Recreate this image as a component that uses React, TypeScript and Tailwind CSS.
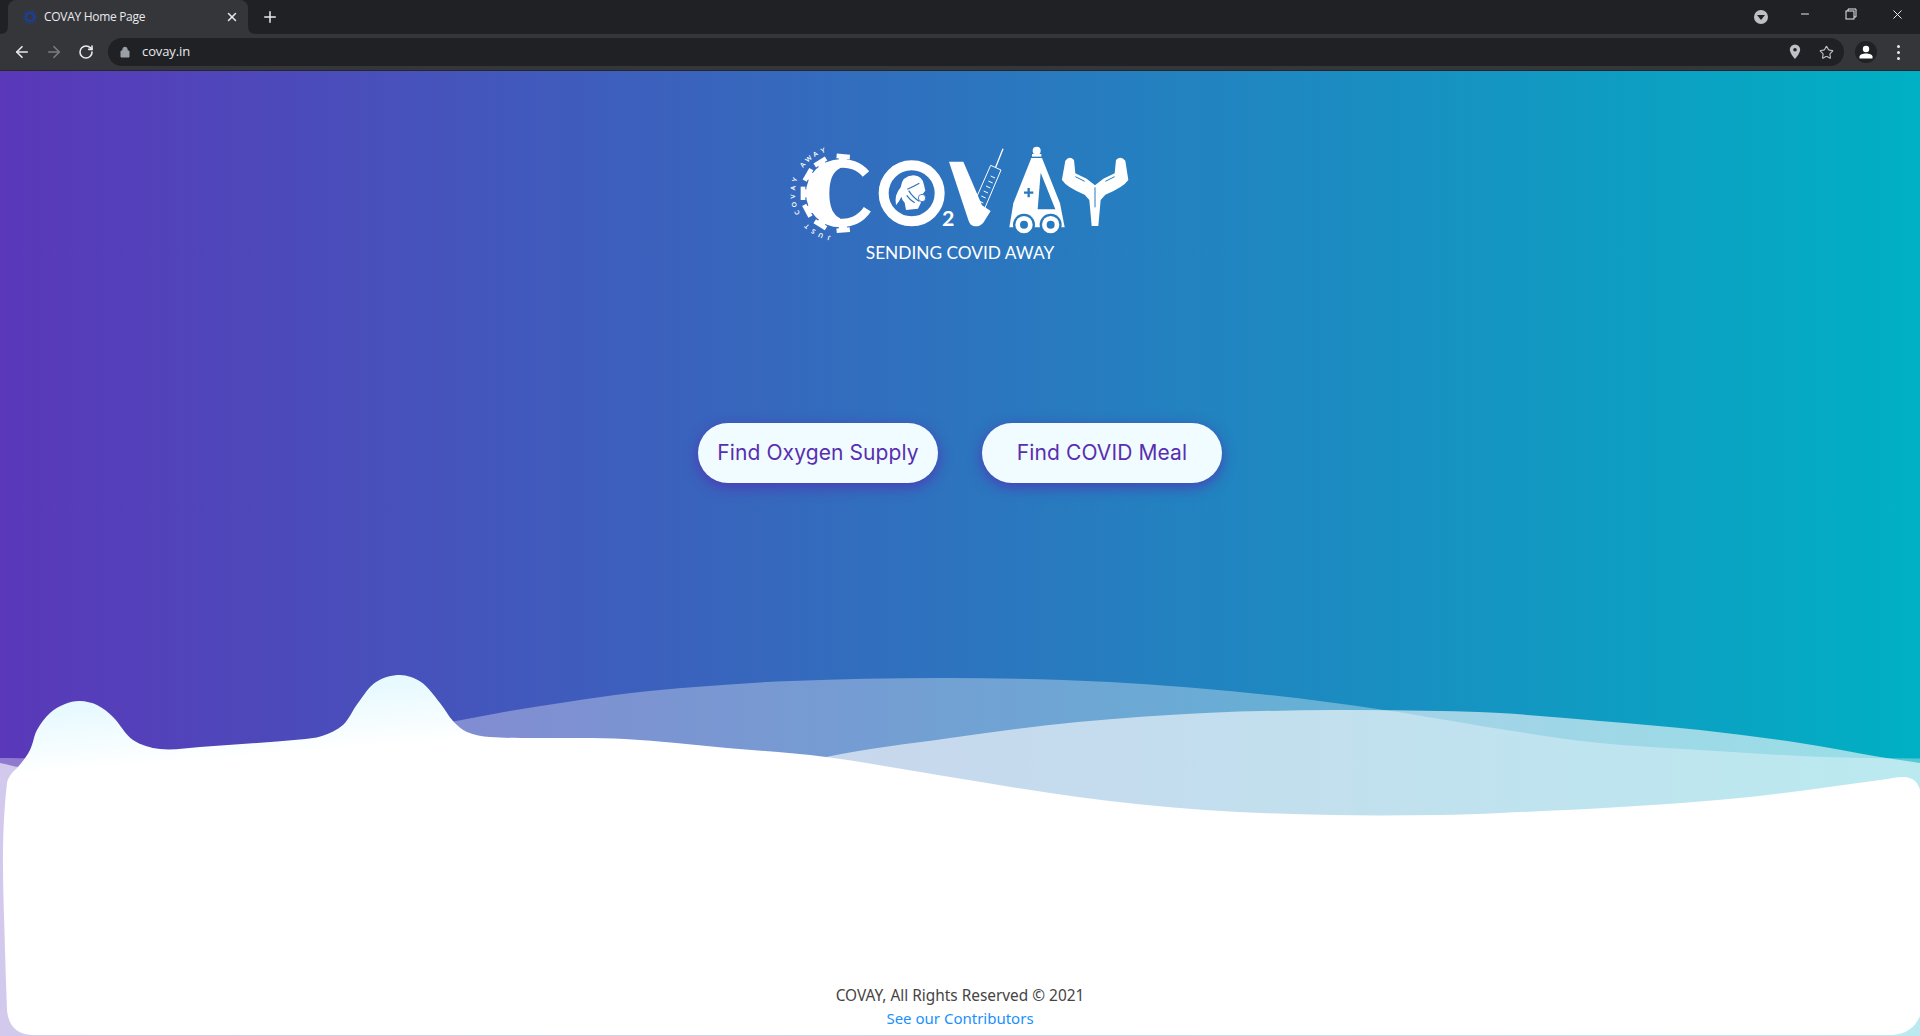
import React from 'react';
import { ArrowLeft, ArrowRight, RotateCw, Plus, X, Star, Minus } from 'lucide-react';

type Pt = [number, number];

// catmull-rom through the traced points, chord-length spaced so uneven points don't kink
function smooth(pts: Pt[]) {
  const t: number[] = [0];
  for (let i = 1; i < pts.length; i++) {
    t.push(t[i - 1] + Math.hypot(pts[i][0] - pts[i - 1][0], pts[i][1] - pts[i - 1][1]));
  }
  const tangent = (i: number): Pt => {
    const a = Math.max(i - 1, 0);
    const b = Math.min(i + 1, pts.length - 1);
    const dt = t[b] - t[a];
    return [(pts[b][0] - pts[a][0]) / dt, (pts[b][1] - pts[a][1]) / dt];
  };
  let d = `M${pts[0][0]} ${pts[0][1]}`;
  for (let i = 0; i < pts.length - 1; i++) {
    const h = (t[i + 1] - t[i]) / 3;
    const m1 = tangent(i);
    const m2 = tangent(i + 1);
    const c1x = pts[i][0] + m1[0] * h;
    const c1y = pts[i][1] + m1[1] * h;
    const c2x = pts[i + 1][0] - m2[0] * h;
    const c2y = pts[i + 1][1] - m2[1] * h;
    d += ` C${c1x.toFixed(1)} ${c1y.toFixed(1)} ${c2x.toFixed(1)} ${c2y.toFixed(1)} ${pts[i + 1][0]} ${pts[i + 1][1]}`;
  }
  return d;
}

const backWave: Pt[] = [
  [0, 758], [30, 758], [300, 745], [400, 731], [456, 721], [504, 712], [567, 702], [631, 693], [695, 687],
  [791, 681], [950, 678], [1110, 682], [1269, 695], [1384, 710], [1440, 719], [1500, 729], [1600, 743],
  [1700, 750], [1800, 756], [1867, 758], [1920, 758.5],
];
const frontWave: Pt[] = [
  [0, 763], [20, 767], [300, 780], [700, 790], [826, 757], [950, 738], [1078, 722], [1205, 713],
  [1333, 710], [1440, 711], [1500, 713], [1600, 721], [1700, 730], [1800, 743], [1880, 757], [1920, 763],
];
const whiteEdge: Pt[] = [
  [7, 1010], [5, 950], [3, 850], [7, 783], [12, 773], [18, 767], [30, 750], [37, 730], [50, 713],
  [65, 704], [80, 701], [97, 705], [113, 717], [133, 740], [160, 749], [200, 747], [300, 739.5], [322, 736],
  [343, 725], [358, 703], [376, 682], [400, 675], [421, 682], [440, 703], [453, 721], [467, 732],
  [490, 737], [540, 738], [625, 739], [727, 748], [826, 757], [950, 777], [1078, 797], [1205, 810], [1333, 815],
  [1440, 815], [1500, 813], [1620, 807], [1750, 797], [1880, 780], [1905, 777], [1916, 782], [1922, 795],
];

function Waves() {
  return (
    <svg className="absolute inset-0 w-full h-full" viewBox="0 71 1920 965" preserveAspectRatio="none">
      <defs>
        <linearGradient id="tint" gradientUnits="userSpaceOnUse" x1="80" y1="700" x2="85.5" y2="770">
          <stop offset="0" stopColor="#e4f9ff" />
          <stop offset="1" stopColor="#ffffff" />
        </linearGradient>
      </defs>
      <path d={`${smooth(backWave)} L1920 1036 L0 1036 Z`} fill="#fff" fillOpacity="0.33" />
      <path d={`${smooth(frontWave)} L1920 1036 L0 1036 Z`} fill="#fff" fillOpacity="0.6" />
      <path
        d={`${smooth(whiteEdge)} L1922 1010 Q1916 1033 1893 1035 L32 1035 Q9 1034 7 1010 Z`}
        fill="url(#tint)"
      />
    </svg>
  );
}

const spikes = [-85, -122, -150, -180, -208, -238, -275];
const ringLetters = 'JUST COVAY AWAY'.split('');

function Logo() {
  return (
    <svg width="380" height="114" viewBox="0 0 1140 342" fill="#fff">
      {/* C with the virus spikes */}
      {spikes.map((a) => (
        <g key={a} transform={`rotate(${a} 210 190)`}>
          <rect x="290" y="178" width="28" height="24" />
          <rect x="314" y="170" width="14" height="40" />
        </g>
      ))}
      <path d="M210 88 A102 102 0 0 0 210 292 L210 265 Q178 250 178 190 Q178 130 210 115 Z" />
      <path d="M205 102 A88 88 0 0 1 288 132" fill="none" stroke="#fff" strokeWidth="25" />
      <path d="M205 278 A88 88 0 0 0 292 238" fill="none" stroke="#fff" strokeWidth="25" />
      {ringLetters.map((ch, i) => {
        const a = 102 + i * 10.6;
        const r = (a * Math.PI) / 180;
        const x = 205 + 135 * Math.cos(r);
        const y = 190 + 135 * Math.sin(r);
        return (
          <text
            key={i}
            x={x}
            y={y}
            fontSize="19"
            fontFamily="Lato, sans-serif"
            fontWeight="700"
            textAnchor="middle"
            dominantBaseline="middle"
            transform={`rotate(${a + 90} ${x} ${y})`}
          >
            {ch}
          </text>
        );
      })}

      {/* O with the masked face */}
      <circle cx="425" cy="190" r="84" fill="none" stroke="#fff" strokeWidth="30" />
      <path d="M392 172 Q396 138 430 136 Q458 138 462 165 L466 182 L458 192 L452 220 L444 236 L408 240 L404 218 Q396 210 394 200 Q388 215 378 226 Q372 195 392 172 Z" />
      <path d="M412 178 Q430 170 448 160 M410 196 Q418 208 434 218 M416 182 Q430 204 448 214" fill="none" stroke="#2d71bb" strokeWidth="3.5" />
      <circle cx="456" cy="204" r="11" stroke="#2d71bb" strokeWidth="2.5" />
      <text x="516" y="288" fontSize="64" fontWeight="700" fontFamily="Lato, sans-serif">2</text>

      {/* V with the syringe */}
      <path d="M537 95 L580 95 L636 226 L662 243 L640 278 Q628 292 610 288 Q600 286 595 270 Z" />
      <g fill="none" stroke="#fff" strokeWidth="3">
        <path d="M609 226 L662 106 L693 120 L642 240 Z" />
        <path d="M598 224 L655 248" strokeWidth="5" />
        <path d="M677 112 L699 56" strokeWidth="4" />
        <path d="M627 213 L640 219 M634 198 L647 204 M641 183 L654 189 M648 168 L661 174 M655 153 L668 159 M662 138 L675 144" />
      </g>

      {/* A, the oxygen trolley */}
      <circle cx="800" cy="62" r="12" />
      <rect x="786" y="72" width="28" height="8" />
      <path d="M784 84 L816 84 L870 220 L884 292 L718 292 L730 220 Z" />
      <path d="M812 128 L856 238 L803 238 Z" fill="#2879bd" />
      <path d="M762 188 H790 M776 174 V202" stroke="#2879bd" strokeWidth="7" />
      {[762, 842].map((cx) => (
        <g key={cx}>
          <circle cx={cx} cy="284" r="33" fill="#2879bd" />
          <circle cx={cx} cy="284" r="26" />
          <circle cx={cx} cy="284" r="12" fill="#2879bd" />
        </g>
      ))}

      {/* Y, two cupped hands */}
      <path d="M876 148 L886 92 Q898 76 912 90 L916 130 L950 146 L975 166 L1000 146 L1034 130 L1038 90 Q1052 76 1066 92 L1075 150 Q1060 172 1006 194 L992 210 L985 288 L965 288 L958 210 L944 194 Q890 172 876 150 Z" />
      <path d="M916 140 L944 154 M1034 140 L1006 154 M975 172 V232" fill="none" stroke="#2879bd" strokeWidth="3" />
    </svg>
  );
}

function TabFlare({ side }: { side: 'l' | 'r' }) {
  return (
    <svg
      className={side === 'l' ? 'absolute bottom-0 -left-2' : 'absolute bottom-0 -right-2'}
      width="8"
      height="8"
      viewBox="0 0 8 8"
      fill="#35363a"
    >
      <path d={side === 'l' ? 'M8 0 V8 H0 Q8 8 8 0 Z' : 'M0 0 V8 H8 Q0 8 0 0 Z'} />
    </svg>
  );
}

function BrowserChrome() {
  return (
    <div className="shrink-0 font-['Open_Sans',sans-serif]">
      <div className="h-[34px] bg-[#202124] flex items-end pl-2 relative">
        <div className="relative w-[240px] h-[34px] bg-[#35363a] rounded-t-lg flex items-center pl-5 pr-2 text-[#e8eaed]">
          <TabFlare side="l" />
          <TabFlare side="r" />
          <svg width="16" height="16" viewBox="0 0 16 16" className="shrink-0 -ml-[6px]">
            <circle cx="8" cy="8" r="4" fill="none" stroke="#1b3f9c" strokeWidth="2" />
            <circle cx="8" cy="8" r="6" fill="none" stroke="#1b3f9c" strokeWidth="1.5" strokeDasharray="1.5 1.5" />
          </svg>
          <span className="ml-[6px] text-xs tracking-[-0.3px] flex-1">COVAY Home Page</span>
          <X size={14} strokeWidth={2.5} className="mr-[1px]" />
        </div>
        <Plus size={18} strokeWidth={2} className="text-[#e8eaed] ml-[13px] mb-2" />
        <div className="ml-auto flex items-center text-[#e8eaed] h-[34px] -mt-1">
          <div className="w-[14px] h-[14px] rounded-full bg-[#bdc1c6] flex items-center justify-center mr-[31px]">
            <div className="w-0 h-0 border-x-[4px] border-x-transparent border-t-[5px] border-t-[#202124]" />
          </div>
          <Minus size={12} strokeWidth={2} className="mr-[34px] -mt-[6px]" />
          <svg width="12" height="12" viewBox="0 0 12 12" fill="none" stroke="#e8eaed" className="mr-[33px] -mt-[6px]">
            <rect x="1" y="3" width="8" height="8" />
            <path d="M3 3 V1 H11 V9 H9" />
          </svg>
          <X size={15} strokeWidth={1.6} className="mr-[15px] -mt-[6px]" />
        </div>
      </div>
      <div className="h-[37px] bg-[#35363a] flex items-center border-b border-[#26272b] text-[#e8eaed]">
        <ArrowLeft size={18} strokeWidth={2.2} className="ml-[13px]" />
        <ArrowRight size={18} strokeWidth={2.2} className="ml-[14px] text-[#7b7d81]" />
        <RotateCw size={16} strokeWidth={2.4} className="ml-[15px]" />
        <div className="ml-[14px] w-[1736px] h-[28px] rounded-full bg-[#202124] flex items-center pl-[12px] pr-[10px]">
          <svg width="10" height="12" viewBox="0 0 10 12" fill="#9aa0a6">
            <path d="M1 5 H9 V11 H1 Z M2.8 5 V3.4 A2.2 2.2 0 0 1 7.2 3.4 V5" stroke="#9aa0a6" strokeWidth="1" />
          </svg>
          <span className="ml-[12px] text-[13px] tracking-[-0.1px]">covay.in</span>
          <svg width="12" height="16" viewBox="0 0 12 16" fill="#bdc1c6" className="ml-auto mr-[18px]">
            <path fillRule="evenodd" d="M6 0.5 A5.2 5.2 0 0 1 11.2 5.7 C11.2 9 6 15 6 15 C6 15 0.8 9 0.8 5.7 A5.2 5.2 0 0 1 6 0.5 Z M6 4 A1.8 1.8 0 1 0 6 7.6 A1.8 1.8 0 1 0 6 4 Z" />
          </svg>
          <Star size={15} strokeWidth={1.8} className="text-[#bdc1c6]" />
        </div>
        <div className="ml-[11px] w-[22px] h-[22px] rounded-full bg-[#202124] flex items-center justify-center">
          <svg width="14" height="14" viewBox="0 0 14 14" fill="#fff">
            <circle cx="7" cy="4" r="3.2" />
            <path d="M0.5 13.5 V11.5 C0.5 9.5 4 8.4 7 8.4 C10 8.4 13.5 9.5 13.5 11.5 V13.5 Z" />
          </svg>
        </div>
        <div className="ml-[20px] flex flex-col gap-[3px]">
          <div className="w-[3px] h-[3px] rounded-full bg-[#e8eaed]" />
          <div className="w-[3px] h-[3px] rounded-full bg-[#e8eaed]" />
          <div className="w-[3px] h-[3px] rounded-full bg-[#e8eaed]" />
        </div>
      </div>
    </div>
  );
}

function App() {
  return (
    <div className="h-screen flex flex-col overflow-hidden">
      <BrowserChrome />
      <main className="relative flex-1 flex flex-col items-center bg-[linear-gradient(90deg,#5a38b9,#00b0c4)]">
        <Waves />

        <div className="relative flex flex-col items-center pt-[59px]">
          <Logo />
          <p className="-mt-px text-white text-[17.3px] leading-[20px] font-['Lato',sans-serif]">SENDING COVID AWAY</p>
        </div>

        {/* CTA buttons */}
        <div className="relative mt-[160px] flex gap-[44px]">
          <button className="w-[240px] h-[60px] rounded-full bg-[#f0fcff] text-[#5a2eb0] text-[21px] font-normal font-['Inter',sans-serif] tracking-[0.1px] shadow-[0_4px_14px_rgba(85,40,175,0.7)]">
            Find Oxygen Supply
          </button>
          <button className="w-[240px] h-[60px] rounded-full bg-[#f0fcff] text-[#5a2eb0] text-[21px] font-normal font-['Inter',sans-serif] tracking-[0.1px] shadow-[0_4px_14px_rgba(85,40,175,0.7)]">
            Find COVID Meal
          </button>
        </div>

        <footer className="relative mt-auto pb-[6px] text-center leading-[23px] font-['Noto_Sans',sans-serif]">
          <p className="text-[#444] text-[15.4px]">COVAY, All Rights Reserved © 2021</p>
          <a href="#" className="text-[#1890ff] text-[15px]">See our Contributors</a>
        </footer>
      </main>
    </div>
  );
}

export default App;
